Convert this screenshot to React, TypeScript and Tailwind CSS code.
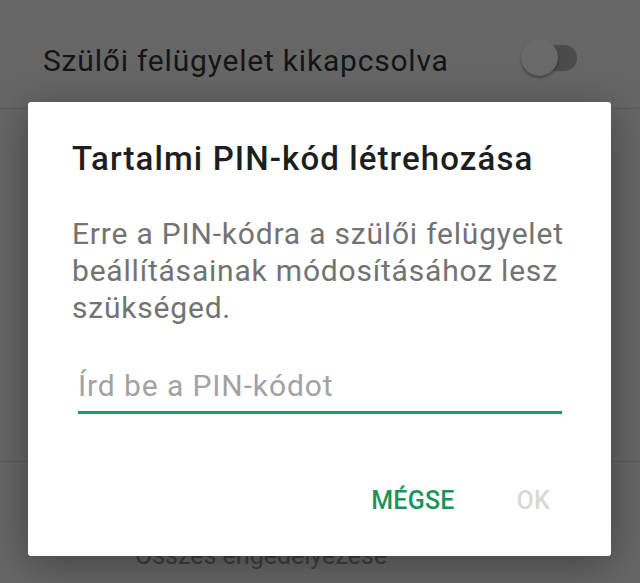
import React from "react";

export default function App() {
  const font = { fontFamily: "Roboto, 'Noto Sans', sans-serif" };
  return (
    <div
      className="relative w-[640px] h-[583px] overflow-hidden bg-[#666666]"
      style={font}
    >
      {/* background settings page under scrim */}
      <div className="flex flex-col">
        <div className="h-[108px] flex items-center justify-between pl-[43px] pr-[63px]">
          <span className="text-[30px] leading-[36px] tracking-[0.8px] text-[#151515] pt-[14px]">
            Szülői felügyelet kikapcsolva
          </span>
          <div className="relative w-[56px] h-[40px]">
            <div className="absolute left-[19px] top-[11px] w-[37px] h-[26px] rounded-full bg-[#4b4b4b]" />
            <div className="absolute left-0 top-[5px] w-[37px] h-[37px] rounded-full bg-[#696969] shadow-[0_2px_3px_rgba(0,0,0,0.35)]" />
          </div>
        </div>
        <div className="h-px bg-[#5a5a5a]" />
        <div className="h-[352px]" />
        <div className="h-px bg-[#5a5a5a]" />
        <div className="pl-[135px] pt-[76px]">
          <span className="text-[25px] leading-[36px] text-[#3e3e3e] whitespace-nowrap">
            Összes engedélyezése
          </span>
        </div>
      </div>

      {/* dialog */}
      <div className="absolute left-[28px] top-[102px] w-[583px] h-[454px] bg-white rounded-[3px] shadow-[0_8px_40px_rgba(0,0,0,0.35)] flex flex-col">
        <div className="pl-[44px] pt-[39px] text-[33px] leading-[36px] tracking-[1.1px] font-medium text-[#1e1e1e] whitespace-nowrap">
          Tartalmi PIN-kód létrehozása
        </div>
        <div className="pl-[44px] mt-[38px] text-[30px] leading-[37px] tracking-[0.8px] text-[#737373] whitespace-nowrap">
          Erre a PIN-kódra a szülői felügyelet
          <br />
          beállításainak módosításához lesz
          <br />
          szükséged.
        </div>
        <div className="ml-[50px] mr-[49px] mt-[42px] pb-[7px] border-b-[3px] border-[#1e9b5f] text-[30px] leading-[36px] tracking-[0.9px] text-[#a2a2a2] whitespace-nowrap">
          Írd be a PIN-kódot
        </div>
        <div className="mt-[73px] flex justify-end gap-[62px] pr-[61px] text-[25px] leading-[28px] tracking-[0.2px] font-medium">
          <span className="text-[#1c935c]">MÉGSE</span>
          <span className="text-[#d9d9d9]">OK</span>
        </div>
      </div>
    </div>
  );
}
